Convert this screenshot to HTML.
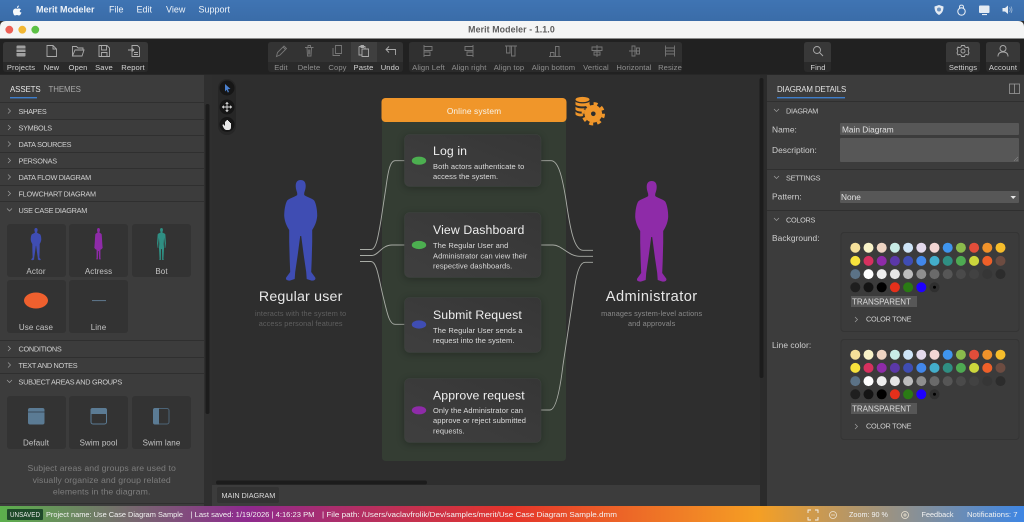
<!DOCTYPE html>
<html>
<head>
<meta charset="utf-8">
<title>Merit Modeler</title>
<style>
html,body{margin:0;padding:0;background:#2d2d2d;width:1024px;height:522px;overflow:hidden}
svg{display:block;filter:blur(.3px)}
text{font-family:"Liberation Sans","DejaVu Sans",sans-serif}
.m{fill:#eef3f9;font-size:9px}
.tb{font-size:7.6px;fill:#d2d2d2;text-anchor:middle;letter-spacing:.1px}
.dis{fill:#8f8f8f}
.acc{font-size:7.3px;fill:#d0d0d0;letter-spacing:-.28px}
.tile{font-size:8px;fill:#c4c4c4;text-anchor:middle;letter-spacing:.1px}
.help{font-size:8.7px;fill:#7d7d7d;text-anchor:middle;letter-spacing:.1px}
.lab{font-size:8.4px;fill:#cfcfcf;letter-spacing:.05px}
.ct{font-size:12.3px;fill:#eeeeee;letter-spacing:.1px}
.cd{font-size:7.5px;fill:#dcdcdc;letter-spacing:.08px}
.st{font-size:7.6px;fill:#f2f2f2}
.ic{fill:none;stroke:#ababab;stroke-width:.9}
.icd{fill:none;stroke:#777777;stroke-width:.9}
.chev{fill:none;stroke:#a0a0a0;stroke-width:.7}
.line{fill:none;stroke:#a9aca6;stroke-width:.9}
.div{stroke:#2f2f2f;stroke-width:1}
</style>
</head>
<body>
<svg width="1024" height="522" viewBox="0 0 1024 522" xmlns="http://www.w3.org/2000/svg">
<defs>
<linearGradient id="sb" x1="0" x2="1" y1="0" y2="0">
<stop offset="0" stop-color="#5cb04c"/>
<stop offset=".24" stop-color="#8e2a8e"/>
<stop offset=".5" stop-color="#e5352a"/>
<stop offset=".74" stop-color="#f59f24"/>
<stop offset="1" stop-color="#3e86e4"/>
</linearGradient>
<linearGradient id="mb" x1="0" x2="0" y1="0" y2="1">
<stop offset="0" stop-color="#3f74b3"/>
<stop offset="1" stop-color="#3a6ca8"/>
</linearGradient>
<linearGradient id="card" x1="0" x2="1" y1="1" y2="0">
<stop offset="0" stop-color="#3f3f3f"/>
<stop offset="1" stop-color="#363636"/>
</linearGradient>
<filter id="sh" x="-20%" y="-20%" width="140%" height="140%"><feGaussianBlur stdDeviation="4"/></filter>
<path id="person" d="M0 0C3.300 0 5 2 5 6C5 9 4 11 3.500 13L3.500 15C6 17 11 18 13.500 20.500C15.500 24 16.500 30 16.500 36C16 42 14 46 11.500 50L11.500 62L11 80L10.500 92L14.500 97.500C15.500 100 13 101 10.500 100.500L6 99L5.500 92L3 75L.5 56L-.5 56L-3 75L-5.500 92L-6 99L-10.500 100.500C-13 101-15.500 100-14.500 97.500L-10.500 92L-11 80L-11.500 62L-11.500 50C-14 46-16 42-16.500 36C-16.500 30-15.500 24-13.500 20.500C-11 18-6 17-3.500 15L-3.500 13C-4 11-5 9-5 6C-5 2-3.300 0 0 0Z"/>
<path id="woman" d="M0 0C3 0 4.500 2.500 4.500 6C4.500 10 3.500 12 2.500 14C5 16 9 17 10 20C11 30 11 40 13 62C10 66 7 68 6 68L6 92L7 98L2 98L1 72L-1 72L-2 98L-7 98L-6 92L-6 68C-7 68-10 66-13 62C-11 40-11 30-10 20C-9 17-5 16-2.500 14C-3.500 12-4.500 10-4.500 6C-4.500 2.500-3 0 0 0Z"/>
<path id="robot" d="M0 0C3 0 4.500 2.500 4.500 6C4.500 10 3 12 2.500 14C6 16 11 17 12 20L14 48L12 62L10 62L10 48L8 30L7 50L8 62L6 98L8 100L2 100L1.500 66L-1.500 66L-2 100L-8 100L-6 98L-8 62L-7 50L-8 30L-10 48L-10 62L-12 62L-14 48L-12 20C-11 17-6 16-2.500 14C-3 12-4.500 10-4.500 6C-4.500 2.500-3 0 0 0Z"/>
<g id="pal">
<circle cx="855.300" cy="0" r="5" fill="#f5e09a"/><circle cx="868.500" cy="0" r="5" fill="#f8f2c8"/><circle cx="881.700" cy="0" r="5" fill="#efd5c3"/><circle cx="894.900" cy="0" r="5" fill="#c8ece6"/><circle cx="908.100" cy="0" r="5" fill="#cfe5f8"/><circle cx="921.300" cy="0" r="5" fill="#e3d9ec"/><circle cx="934.500" cy="0" r="5" fill="#f3d6d3"/><circle cx="947.700" cy="0" r="5" fill="#3f95ee"/><circle cx="960.900" cy="0" r="5" fill="#8bbb4c"/><circle cx="974.100" cy="0" r="5" fill="#e24d3a"/><circle cx="987.300" cy="0" r="5" fill="#f0922a"/><circle cx="1000.500" cy="0" r="5" fill="#f6bd2b"/>
<circle cx="855.300" cy="13.200" r="5" fill="#f8e33c"/><circle cx="868.500" cy="13.200" r="5" fill="#d6315f"/><circle cx="881.700" cy="13.200" r="5" fill="#8e2ba8"/><circle cx="894.900" cy="13.200" r="5" fill="#5b38a8"/><circle cx="908.100" cy="13.200" r="5" fill="#3f4db3"/><circle cx="921.300" cy="13.200" r="5" fill="#4287ea"/><circle cx="934.500" cy="13.200" r="5" fill="#43aecb"/><circle cx="947.700" cy="13.200" r="5" fill="#2f8f83"/><circle cx="960.900" cy="13.200" r="5" fill="#4eaa52"/><circle cx="974.100" cy="13.200" r="5" fill="#ccd63c"/><circle cx="987.300" cy="13.200" r="5" fill="#ef6029"/><circle cx="1000.500" cy="13.200" r="5" fill="#6d4c41"/>
<circle cx="855.300" cy="26.400" r="5" fill="#5b7286"/><circle cx="868.500" cy="26.400" r="5" fill="#ffffff"/><circle cx="881.700" cy="26.400" r="5" fill="#eeeeee"/><circle cx="894.900" cy="26.400" r="5" fill="#e6e6e6"/><circle cx="908.100" cy="26.400" r="5" fill="#bdbdbd"/><circle cx="921.300" cy="26.400" r="5" fill="#8e8e8e"/><circle cx="934.500" cy="26.400" r="5" fill="#6a6a6a"/><circle cx="947.700" cy="26.400" r="5" fill="#565656"/><circle cx="960.900" cy="26.400" r="5" fill="#4a4a4a"/><circle cx="974.100" cy="26.400" r="5" fill="#424242"/><circle cx="987.300" cy="26.400" r="5" fill="#363636"/><circle cx="1000.500" cy="26.400" r="5" fill="#2c2c2c"/>
<circle cx="855.300" cy="39.600" r="5" fill="#1f1f1f"/><circle cx="868.500" cy="39.600" r="5" fill="#141414"/><circle cx="881.700" cy="39.600" r="5" fill="#000000"/><circle cx="894.900" cy="39.600" r="5" fill="#e5301b"/><circle cx="908.100" cy="39.600" r="5" fill="#2a7a14"/><circle cx="921.300" cy="39.600" r="5" fill="#1e00ff"/><circle cx="934.500" cy="39.600" r="5" fill="#2f2f2f"/><circle cx="934.500" cy="39.600" r="1.500" fill="#000"/>
</g>
</defs>

<!-- Mac menu bar -->
<rect width="1024" height="21" fill="url(#mb)"/>
<path d="M21.500 12.500C21 14 20 15.500 19 15.500C18 15.500 18 15 17 15C16 15 15.800 15.500 15 15.500C13.800 15.500 13 13 13 11.500C13 9 15.500 8 17 8.800C18 8.800 19.500 7.700 21 9.500C19 10.800 19.700 12.500 21.500 12.500ZM18.800 5.500C19 6.800 18 8 17 8C16.800 6.800 17.800 5.700 18.800 5.500Z" fill="#f5f8fb"/>
<text x="36" y="12.700" class="m" font-weight="700">Merit Modeler</text>
<text x="109" y="12.700" class="m">File</text>
<text x="136.500" y="12.700" class="m">Edit</text>
<text x="166" y="12.700" class="m">View</text>
<text x="198.500" y="12.700" class="m">Support</text>
<path d="M939 5L943.500 6.500C943.500 10.500 942.500 13 939 15C935.500 13 934.500 10.500 934.500 6.500Z" fill="#e4ebf3"/><circle cx="939" cy="9.500" r="2" fill="#6d93c0"/>
<circle cx="961.500" cy="11.500" r="3.700" fill="none" stroke="#e4ebf3" stroke-width="1.100"/><path d="M959.500 8V7C959.500 4.500 963.500 4.500 963.500 7V8" fill="none" stroke="#e4ebf3"/>
<rect x="979" y="5.500" width="10.500" height="7.500" rx="1" fill="#e4ebf3"/><rect x="982" y="14" width="5" height="1.100" fill="#e4ebf3"/>
<path d="M1002.500 8H1005L1008 5.500V14L1005 11.500H1002.500Z" fill="#e4ebf3"/><path d="M1009.500 7.500Q1011 9.700 1009.500 12M1011 6.500Q1013 9.700 1011 13" fill="none" stroke="#a9c0da" stroke-width=".7"/>

<!-- Window title bar -->
<path d="M0 27Q0 21 6 21H1018Q1024 21 1024 27V39H0Z" fill="#f4f5f5"/>
<circle cx="9.300" cy="29.700" r="3.900" fill="#ec5f55"/>
<circle cx="22.300" cy="29.700" r="3.900" fill="#f2b733"/>
<circle cx="35.300" cy="29.700" r="3.900" fill="#5cc145"/>
<text x="511.500" y="32.700" font-size="8.800" font-weight="700" fill="#5c5c5c" text-anchor="middle" letter-spacing=".1">Merit Modeler - 1.1.0</text>

<!-- Toolbar -->
<rect y="38.500" width="1024" height="36" fill="#212121"/>
<rect x="3" y="42" width="145" height="30" rx="3" fill="#2a2a2a"/>
<path d="M3 62V45Q3 42 6 42H145Q148 42 148 45V62Z" fill="#383838"/>
<rect x="268" y="42" width="135" height="30" rx="3" fill="#2a2a2a"/>
<path d="M268 62V45Q268 42 271 42H400Q403 42 403 45V62Z" fill="#333333"/>
<rect x="351" y="42" width="26" height="20" fill="#3f3f3f"/>
<rect x="409" y="42" width="273" height="30" rx="3" fill="#2a2a2a"/>
<path d="M409 62V45Q409 42 412 42H679Q682 42 682 45V62Z" fill="#303030"/>
<rect x="804" y="42" width="27" height="30" rx="3" fill="#2a2a2a"/>
<path d="M804 62V45Q804 42 807 42H828Q831 42 831 45V62Z" fill="#383838"/>
<rect x="946" y="42" width="34" height="30" rx="3" fill="#2a2a2a"/>
<path d="M946 62V45Q946 42 949 42H977Q980 42 980 45V62Z" fill="#383838"/>
<rect x="986" y="42" width="34" height="30" rx="3" fill="#2a2a2a"/>
<path d="M986 62V45Q986 42 989 42H1017Q1020 42 1020 45V62Z" fill="#383838"/>

<!-- toolbar icons -->
<rect x="16.500" y="45.500" width="9" height="11" rx="1" fill="#a0a0a0"/><path d="M16.500 49H25.500M16.500 52.500H25.500" stroke="#3a3a3a"/>
<path class="ic" d="M47 45.500H53L56.500 49V56.500H47ZM53 45.500V49H56.500"/>
<path class="ic" d="M72.500 56V46.500H76.500L78 48H83V50M72.500 56L75 50H84L82 56Z"/>
<path class="ic" d="M99 45.500H107L109.500 48V56.500H99ZM101.500 45.500V50H106.500V45.500M101.500 56.500V52.500H107V56.500"/>
<path class="ic" d="M132 45.500H137.500L139.500 47.500V56.500H132ZM128 50H134M131.500 48L134 50L131.500 52M134 52.500H138M134 54.500H138"/>
<path class="icd" d="M276.500 56.500L277.500 52.500L284 46L286.500 48.500L280 55ZM283 47L285.500 49.500"/>
<path class="icd" d="M305 47.500H313.500M307 47.500L307.500 56H311L311.500 47.500M308 47.500V45.500H310.500V47.500M308.700 49.500V54.500M309.800 49.500V54.500"/>
<path class="icd" d="M333 48V55.500H340M335.500 45.500H341.500V53.500H335.500Z"/>
<path class="ic" d="M359 46.500H365V49M359 46.500V55H362M362 49H368.500V56.500H362ZM361 45.500H363.500V47.500H361Z"/>
<path class="ic" d="M395.500 55V49.500H386M389 46.500L386 49.500L389 52.500"/>
<path class="icd" d="M424 45V57M424 46.500H432V50.500H424M424 52H430V55.500H424"/>
<path class="icd" d="M473 45V57M473 46.500H465V50.500H473M473 52H467V55.500H473"/>
<path class="icd" d="M505 46H517M506.500 46V53H510V46M511.500 46V56H515V46"/>
<path class="icd" d="M549 56.500H561M550.500 56.500V52.500H554V56.500M555.500 56.500V46.500H559V56.500"/>
<path class="icd" d="M597 45V57M592 47H602V50.500H592ZM594 52H600V55H594Z"/>
<path class="icd" d="M629 51H640M632 46H635V56H632ZM636.500 48H639.500V54H636.500Z"/>
<path class="icd" d="M665.500 45.500V56.500M674.500 45.500V56.500M665.500 48H674.500M665.500 51H674.500M665.500 54H674.500"/>
<circle class="ic" cx="817" cy="50" r="3.500"/><path class="ic" d="M819.500 52.500L823 56"/>
<circle class="ic" cx="963" cy="51" r="2"/><path class="ic" d="M961.500 45.500H964.500L965 47L966.500 47.500L968 47L969 49L968.300 50.500V51.500L969 53L968 55L966.500 54.500L965 55L964.500 56.500H961.500L961 55L959.500 54.500L958 55L957 53L957.700 51.500V50.500L957 49L958 47L959.500 47.500L961 47Z"/>
<circle class="ic" cx="1003" cy="48.500" r="3"/><path class="ic" d="M998 56.500C998 53.500 1000 52 1003 52C1006 52 1008 53.500 1008 56.500"/>

<text x="21" y="70" class="tb">Projects</text><text x="51.500" y="70" class="tb">New</text><text x="78" y="70" class="tb">Open</text><text x="104" y="70" class="tb">Save</text><text x="133" y="70" class="tb">Report</text>
<text x="281" y="70" class="tb dis">Edit</text><text x="309" y="70" class="tb dis">Delete</text><text x="337.500" y="70" class="tb dis">Copy</text><text x="363.500" y="70" class="tb">Paste</text><text x="390" y="70" class="tb">Undo</text>
<text x="428.500" y="70" class="tb dis">Align Left</text><text x="469" y="70" class="tb dis">Align right</text><text x="509" y="70" class="tb dis">Align top</text><text x="553.500" y="70" class="tb dis">Align bottom</text><text x="596" y="70" class="tb dis">Vertical</text><text x="634" y="70" class="tb dis">Horizontal</text><text x="670" y="70" class="tb dis">Resize</text>
<text x="818" y="70" class="tb">Find</text><text x="963" y="70" class="tb">Settings</text><text x="1003" y="70" class="tb">Account</text>

<!-- Left panel -->
<rect y="75" width="204" height="431" fill="#3c3c3c"/>
<rect x="204" y="75" width="8" height="431" fill="#2f2f2f"/>
<rect x="205.500" y="104" width="4" height="310" rx="2" fill="#1c1c1c"/>
<text x="10" y="92" font-size="7.900" fill="#e6e6e6" letter-spacing="-.1">ASSETS</text>
<text x="48.500" y="92" font-size="7.900" fill="#a9a9a9" letter-spacing="-.1">THEMES</text>
<rect x="10" y="97" width="27" height="1.400" fill="#3f7ecb"/>
<g class="div">
<line x1="0" x2="204" y1="102.500" y2="102.500"/><line x1="0" x2="204" y1="119.500" y2="119.500"/><line x1="0" x2="204" y1="135.500" y2="135.500"/><line x1="0" x2="204" y1="152.500" y2="152.500"/><line x1="0" x2="204" y1="168.500" y2="168.500"/><line x1="0" x2="204" y1="185.500" y2="185.500"/><line x1="0" x2="204" y1="201.500" y2="201.500"/><line x1="0" x2="204" y1="340.500" y2="340.500"/><line x1="0" x2="204" y1="357.500" y2="357.500"/><line x1="0" x2="204" y1="373.500" y2="373.500"/><line x1="0" x2="204" y1="503.500" y2="503.500"/>
</g>
<path class="chev" d="M8 108.500L10.500 111L8 113.500M8 125L10.500 127.500L8 130M8 141.500L10.500 144L8 146.500M8 158L10.500 160.500L8 163M8 174.500L10.500 177L8 179.500M8 191L10.500 193.500L8 196M7 208.500L9.500 211L12 208.500M8 346L10.500 348.500L8 351M8 362.500L10.500 365L8 367.500M7 380L9.500 382.500L12 380"/>
<text x="18.500" y="114" class="acc">SHAPES</text><text x="18.500" y="130.500" class="acc">SYMBOLS</text><text x="18.500" y="147" class="acc">DATA SOURCES</text><text x="18.500" y="163.500" class="acc">PERSONAS</text><text x="18.500" y="180" class="acc">DATA FLOW DIAGRAM</text><text x="18.500" y="196.500" class="acc">FLOWCHART DIAGRAM</text><text x="18.500" y="213" class="acc">USE CASE DIAGRAM</text><text x="18.500" y="351.500" class="acc">CONDITIONS</text><text x="18.500" y="368" class="acc">TEXT AND NOTES</text><text x="18.500" y="384.500" class="acc">SUBJECT AREAS AND GROUPS</text>

<g fill="#333333">
<rect x="7" y="224" width="59" height="53" rx="3"/><rect x="69" y="224" width="59" height="53" rx="3"/><rect x="132" y="224" width="59" height="53" rx="3"/>
<rect x="7" y="280" width="59" height="53" rx="3"/><rect x="69" y="280" width="59" height="53" rx="3"/>
<rect x="7" y="396" width="59" height="53" rx="3"/><rect x="69" y="396" width="59" height="53" rx="3"/><rect x="132" y="396" width="59" height="53" rx="3"/>
</g>
<use href="#person" transform="translate(36,228) scale(.32)" fill="#3f4db3"/>
<use href="#woman" transform="translate(98.500,228) scale(.32)" fill="#8e2ba8"/>
<use href="#robot" transform="translate(161.500,228) scale(.32)" fill="#2f8f83"/>
<ellipse cx="36" cy="300.500" rx="12" ry="8" fill="#ef602e"/>
<rect x="92" y="300" width="14" height="1.100" fill="#5b7286"/>
<text x="36" y="274" class="tile">Actor</text><text x="98.500" y="274" class="tile">Actress</text><text x="161.500" y="274" class="tile">Bot</text>
<text x="36" y="330" class="tile">Use case</text><text x="98.500" y="330" class="tile">Line</text>
<rect x="28" y="408" width="16.500" height="16.500" rx="2" fill="#5b7b94"/><rect x="28" y="411.500" width="16.500" height="1" fill="#3a4a58"/>
<rect x="91" y="408.500" width="15.500" height="15.500" rx="2" fill="none" stroke="#5b7b94"/><path d="M90.500 414V410Q90.500 408 92.500 408H105Q107 408 107 410V414Z" fill="#5b7b94"/>
<rect x="153.500" y="408.500" width="15.500" height="15.500" rx="2" fill="none" stroke="#4c6477"/><path d="M159 408V424.500H155Q153 424.500 153 422.500V410Q153 408 155 408Z" fill="#5b7b94"/>
<text x="36" y="445.500" class="tile">Default</text><text x="98.500" y="445.500" class="tile">Swim pool</text><text x="161.500" y="445.500" class="tile">Swim lane</text>
<text x="101.700" y="471" class="help">Subject areas and groups are used to</text>
<text x="101.700" y="483" class="help">visually organize and group related</text>
<text x="101.700" y="494.500" class="help">elements in the diagram.</text>

<!-- Canvas -->
<rect x="212" y="75" width="548" height="410" fill="#2e2e2e"/>
<rect x="760" y="75" width="7" height="431" fill="#2b2b2b"/>
<rect x="759.500" y="78" width="4" height="300" rx="2" fill="#1c1c1c"/>
<rect x="218" y="79" width="18" height="56" rx="9" fill="#262626"/>
<circle cx="227" cy="88" r="7.500" fill="#161616"/><circle cx="227" cy="107" r="7.500" fill="#161616"/><circle cx="227" cy="124.500" r="7.500" fill="#161616"/>
<path d="M225 84L230.500 89L227.800 89.300L229 92L227.800 92.500L226.700 89.800L225 91.500Z" fill="#4a80cf"/>
<path d="M227 102.500V111.500M222.500 107H231.500M225.700 103.800L227 102.500L228.300 103.800M225.700 110.200L227 111.500L228.300 110.200M223.800 105.700L222.500 107L223.800 108.300M230.200 105.700L231.500 107L230.200 108.300" stroke="#dcdcdc" stroke-width=".9" fill="none"/>
<path d="M223 124L225 126V121.500H226V120.500H227V120H228V121H229V122H230V123H231V127C231 129 230 130 228 130H226.500C225 130 224 129 222.500 125.500Z" fill="#e8e8e8"/>

<!-- Swimlane -->
<path d="M382 120H566V457Q566 461 562 461H386Q382 461 382 457Z" fill="#343d33"/>
<rect x="381.500" y="98" width="185" height="24" rx="4" fill="#f0962a"/>
<text x="474" y="114" font-size="8.400" fill="#f7f3e8" text-anchor="middle" letter-spacing=".1">Online system</text>

<!-- Database + gear -->
<g fill="#f0962a">
<ellipse cx="582.500" cy="99.500" rx="7" ry="2.600"/>
<path d="M575.500 101.500V104.500C577 107 588 107 589.500 104.500V101.500C588 104 577 104 575.500 101.500Z"/>
<path d="M575.500 106.500V109.500C577 112 584 112 587 111L589.500 106.500C587 109 577 109 575.500 106.500Z"/>
<path d="M575.500 111.500V114.500C577 116.500 581 116.700 583 116L584.500 113.500C581 114 577 113.500 575.500 111.500Z"/>
</g>
<circle cx="593.300" cy="113.800" r="10.600" fill="#2e2e2e" opacity=".7"/>
<circle cx="593.300" cy="113.800" r="8.800" fill="#f0962a"/>
<circle cx="593.300" cy="113.800" r="10.200" fill="none" stroke="#f0962a" stroke-width="3" stroke-dasharray="4 4.010"/>
<circle cx="593.300" cy="113.800" r="2.300" fill="#2e2e2e"/>

<!-- Connectors -->
<path class="line" d="M360 249.500H371C376 249.500 378 238 381 220L386 187C388 172 390 160.700 395 160.700H405"/>
<path class="line" d="M360 255.500H372C378 255.500 382 245 392 245H405"/>
<path class="line" d="M360 261.500H371C377 261.500 379 280 383 296C387 312 389 324.300 395 324.300H405"/>
<path class="line" d="M541 160.700H551C558 160.700 562 175 566 200C570 228 574 250.300 583 250.300H593"/>
<path class="line" d="M541 245H553C562 245 568 256.300 580 256.300H593"/>
<path class="line" d="M541 410H550C556 410 560 390 563 365L575 285C577 272 580 262.300 585 262.300H593"/>

<!-- Cards -->
<g fill="#000" opacity=".28" filter="url(#sh)">
<rect x="404" y="136" width="137" height="52" rx="5"/><rect x="404" y="214" width="137" height="65" rx="5"/><rect x="404" y="299" width="137" height="55" rx="5"/><rect x="404" y="380" width="137" height="64" rx="5"/>
</g>
<g fill="url(#card)" stroke="#3f4540" stroke-width=".5">
<rect x="404.500" y="134.500" width="136.500" height="52" rx="5"/>
<rect x="404.500" y="212.500" width="136.500" height="65" rx="5"/>
<rect x="404.500" y="297.500" width="136.500" height="55" rx="5"/>
<rect x="404.500" y="378.500" width="136.500" height="64" rx="5"/>
</g>
<ellipse cx="419" cy="160.700" rx="7.200" ry="4.100" fill="#4caf50"/>
<ellipse cx="419" cy="245" rx="7.200" ry="4.100" fill="#4caf50"/>
<ellipse cx="419" cy="324.500" rx="7.200" ry="4.100" fill="#3f4db3"/>
<ellipse cx="419" cy="410.300" rx="7.200" ry="4.100" fill="#8e2ba8"/>
<text x="433" y="155" class="ct">Log in</text>
<text x="433" y="169" class="cd">Both actors authenticate to</text>
<text x="433" y="179" class="cd">access the system.</text>
<text x="433" y="234" class="ct">View Dashboard</text>
<text x="433" y="248" class="cd">The Regular User and</text>
<text x="433" y="258.300" class="cd">Administrator can view their</text>
<text x="433" y="268.500" class="cd">respective dashboards.</text>
<text x="433" y="319" class="ct">Submit Request</text>
<text x="433" y="333" class="cd">The Regular User sends a</text>
<text x="433" y="343" class="cd">request into the system.</text>
<text x="433" y="399.500" class="ct">Approve request</text>
<text x="433" y="413" class="cd">Only the Administrator can</text>
<text x="433" y="423" class="cd">approve or reject submitted</text>
<text x="433" y="433.500" class="cd">requests.</text>

<!-- Actors -->
<use href="#person" transform="translate(300.700,180)" fill="#3f4db3"/>
<use href="#person" transform="translate(651.700,181)" fill="#8e2ba8"/>
<text x="300.700" y="301" font-size="14.200" fill="#e8e8e8" text-anchor="middle" letter-spacing=".2">Regular user</text>
<text x="300.700" y="316" font-size="7.300" fill="#5f5f5f" text-anchor="middle" letter-spacing=".12">interacts with the system to</text>
<text x="300.700" y="326" font-size="7.300" fill="#5f5f5f" text-anchor="middle" letter-spacing=".12">access personal features</text>
<text x="651.700" y="301" font-size="14.600" fill="#e8e8e8" text-anchor="middle" letter-spacing=".45">Administrator</text>
<text x="651.700" y="316" font-size="7.300" fill="#8a8a8a" text-anchor="middle" letter-spacing=".12">manages system-level actions</text>
<text x="651.700" y="326" font-size="7.300" fill="#8a8a8a" text-anchor="middle" letter-spacing=".12">and approvals</text>

<!-- Bottom tabs -->
<rect x="212" y="485" width="548" height="21" fill="#3c3c3c"/>
<rect x="216" y="480.500" width="211" height="4" rx="2" fill="#1c1c1c"/>
<rect x="217" y="487" width="62" height="16" rx="2" fill="#333333"/>
<text x="221.500" y="498" font-size="7.300" fill="#dcdcdc" letter-spacing="-.05">MAIN DIAGRAM</text>

<!-- Right panel -->
<rect x="767" y="75" width="257" height="431" fill="#3c3c3c"/>
<text x="777" y="92" font-size="7.900" fill="#e2e2e2" letter-spacing="-.15">DIAGRAM DETAILS</text>
<rect x="777" y="97" width="68" height="1.400" fill="#3f7ecb"/>
<rect x="1009.500" y="84" width="10" height="9.500" fill="none" stroke="#9a9a9a" stroke-width=".8"/><path d="M1014.500 84V93.500" stroke="#9a9a9a" stroke-width=".8"/>
<g class="div"><line x1="767" x2="1024" y1="101.500" y2="101.500"/><line x1="767" x2="1024" y1="169.500" y2="169.500"/><line x1="767" x2="1024" y1="210.500" y2="210.500"/></g>
<path class="chev" d="M774 109L776.500 111.500L779 109M774 176L776.500 178.500L779 176M774 218L776.500 220.500L779 218"/>
<text x="786" y="113.500" class="acc">DIAGRAM</text>
<text x="786" y="180.500" class="acc">SETTINGS</text>
<text x="786" y="222.500" class="acc">COLORS</text>
<text x="772" y="132.500" class="lab">Name:</text>
<text x="772" y="153" class="lab">Description:</text>
<text x="772" y="199.500" class="lab">Pattern:</text>
<text x="772" y="241" class="lab">Background:</text>
<text x="772" y="348" class="lab">Line color:</text>
<rect x="840" y="123" width="179" height="12" rx="1" fill="#575757"/>
<text x="842" y="132.500" font-size="8.300" fill="#e0e0e0">Main Diagram</text>
<rect x="840" y="138" width="179" height="24" rx="1" fill="#575757"/>
<path d="M1014 161L1018 157M1016.500 161L1018 159.500" stroke="#888" stroke-width=".6"/>
<rect x="840" y="191" width="179" height="12" rx="1" fill="#575757"/>
<text x="841" y="200" font-size="8.300" fill="#e0e0e0">None</text>
<path d="M1010.500 196H1016L1013.200 199Z" fill="#e6e6e6"/>
<rect x="841" y="232.500" width="178" height="99" rx="3" fill="#3b3b3b" stroke="#343434"/>
<rect x="841" y="339.500" width="178" height="100" rx="3" fill="#3b3b3b" stroke="#343434"/>
<use href="#pal" y="247.700"/>
<use href="#pal" y="354.700"/>
<rect x="851" y="296" width="66" height="11" fill="#575757"/>
<rect x="851" y="403" width="66" height="11" fill="#575757"/>
<text x="852" y="304.500" font-size="8" fill="#dcdcdc">TRANSPARENT</text>
<text x="852" y="411.500" font-size="8" fill="#dcdcdc">TRANSPARENT</text>
<path class="chev" d="M855 424L857.500 426.500L855 429M855 317L857.500 319.500L855 322"/>
<text x="866" y="321.500" class="acc">COLOR TONE</text>
<text x="866" y="428.500" class="acc">COLOR TONE</text>

<!-- Status bar -->
<rect y="506" width="1024" height="16" fill="url(#sb)"/>
<rect x="7" y="509" width="36" height="11" rx="1" fill="#1f4a2a"/>
<text x="10" y="517" font-size="7" fill="#e8e8e8" textLength="30" lengthAdjust="spacingAndGlyphs">UNSAVED</text>
<text x="46" y="517" class="st" textLength="137" lengthAdjust="spacingAndGlyphs">Project name: Use Case Diagram Sample</text>
<text x="190.500" y="517" class="st" textLength="124" lengthAdjust="spacingAndGlyphs">| Last saved: 1/19/2026 | 4:16:23 PM</text>
<text x="322" y="517" class="st" textLength="295" lengthAdjust="spacingAndGlyphs">| File path: /Users/vaclavfrolik/Dev/samples/merit/Use Case Diagram Sample.dmm</text>
<path d="M808 513V510H811M815 510H818V513M818 517V520H815M811 520H808V517" fill="none" stroke="#f2f2f2" stroke-width=".9"/>
<circle cx="833" cy="515" r="3.500" fill="none" stroke="#ece2d0" stroke-width=".8"/><path d="M831 515H835" stroke="#ece2d0" stroke-width=".8"/>
<text x="849" y="517" class="st" textLength="39" lengthAdjust="spacingAndGlyphs">Zoom: 90 %</text>
<circle cx="905" cy="515" r="3.500" fill="none" stroke="#ece2d0" stroke-width=".8"/><path d="M903 515H907M905 513V517" stroke="#ece2d0" stroke-width=".8"/>
<text x="921.500" y="517" class="st" textLength="32" lengthAdjust="spacingAndGlyphs">Feedback</text>
<text x="967" y="517" class="st" textLength="50.500" lengthAdjust="spacingAndGlyphs">Notifications: 7</text>
</svg>
</body>
</html>
